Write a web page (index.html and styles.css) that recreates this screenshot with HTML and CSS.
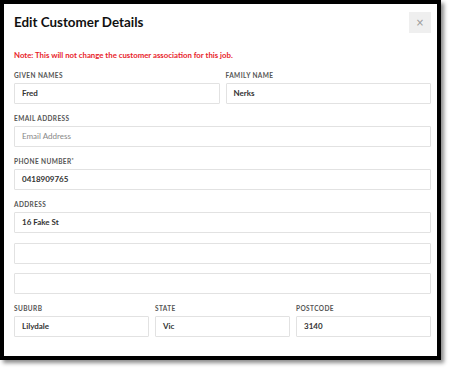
FILE: index.html
```html
<!DOCTYPE html>
<html>
<head>
<meta charset="utf-8">
<link rel="stylesheet" href="styles.css">
</head>
<body>
<div class="modal">
  <div class="modal-header">
    <h1 class="title">Edit Customer Details</h1>
    <button class="close" type="button">×</button>
  </div>
  <p class="note">Note: This will not change the customer association for this job.</p>
  <div class="row cols-2 first">
    <div class="field">
      <label class="label">Given Names</label>
      <div class="input">Fred</div>
    </div>
    <div class="field">
      <label class="label">Family Name</label>
      <div class="input">Nerks</div>
    </div>
  </div>
  <div class="row">
    <div class="field">
      <label class="label">Email Address</label>
      <div class="input placeholder">Email Address</div>
    </div>
  </div>
  <div class="row">
    <div class="field">
      <label class="label">Phone Number<sup class="req">*</sup></label>
      <div class="input">0418909765</div>
    </div>
  </div>
  <div class="row">
    <div class="field">
      <label class="label">Address</label>
      <div class="input">16 Fake St</div>
      <div class="input extra"></div>
      <div class="input extra"></div>
    </div>
  </div>
  <div class="row cols-3">
    <div class="field">
      <label class="label">Suburb</label>
      <div class="input">Lilydale</div>
    </div>
    <div class="field">
      <label class="label">State</label>
      <div class="input">Vic</div>
    </div>
    <div class="field">
      <label class="label">Postcode</label>
      <div class="input">3140</div>
    </div>
  </div>
</div>
</body>
</html>
```

FILE: styles.css
```css
* { box-sizing: border-box; }
html, body { margin: 0; padding: 0; background: #fff; }
body {
  font-family: Lato, "Liberation Sans", Arial, sans-serif;
  color: #222;
  width: 449px;
  height: 370px;
}
.modal {
  width: 441px;
  height: 360px;
  border: 4px solid #000;
  background: #fff;
  box-shadow: 3px 3px 4px rgba(0,0,0,0.45);
  padding: 8px 6px 0 10px;
}
.modal-header {
  display: flex;
  justify-content: space-between;
  align-items: flex-start;
}
.title {
  margin: 2px 0 0 0;
  font-size: 13.4px;
  line-height: 16px;
  font-weight: 700;
  color: #111;
}
.close {
  width: 22px;
  height: 21px;
  border: none;
  background: #efefef;
  color: #999;
  font-size: 10px;
  line-height: 21px;
  padding: 0;
  font-family: "DejaVu Sans", sans-serif;
}
.note {
  margin: 17px 0 0 0;
  font-size: 7.8px;
  line-height: 10px;
  font-weight: 700;
  color: #e8232b;
}
.row {
  margin-top: 10px;
  display: grid;
  grid-template-columns: 1fr;
  column-gap: 6px;
}
.row.first { margin-top: 11px; }
.row.cols-2 { grid-template-columns: 1fr 1fr; }
.row.cols-3 { grid-template-columns: 1fr 1fr 1fr; }
.field { display: flex; flex-direction: column; }
.label {
  display: block;
  font-size: 6.5px;
  line-height: 10px;
  font-weight: 700;
  letter-spacing: 0.4px;
  text-transform: uppercase;
  color: #555;
  margin-bottom: 2px;
}
.req { font-size: 5px; vertical-align: top; line-height: 6px; }
.input {
  height: 21px;
  border: 1px solid #e2e2e2;
  border-radius: 1px;
  padding: 0 7px;
  font-size: 8px;
  line-height: 19px;
  font-weight: 700;
  color: #333;
}
.input.placeholder { color: #888; font-weight: 400; }
.input.extra { margin-top: 9.5px; }
```
